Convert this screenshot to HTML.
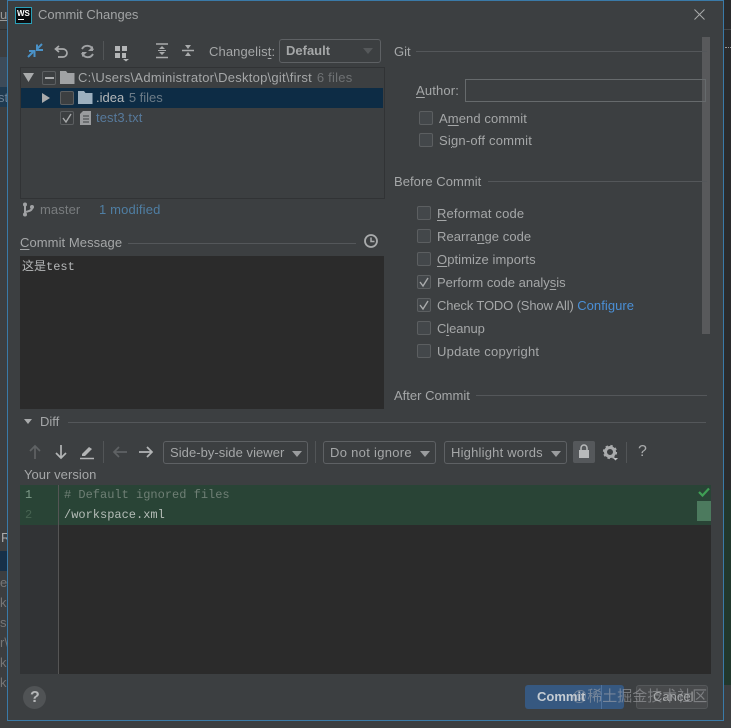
<!DOCTYPE html>
<html><head><meta charset="utf-8"><style>
html,body{margin:0;padding:0;background:#3c3e40}
body{width:731px;height:728px;overflow:hidden;position:relative;font:13px "Liberation Sans","Noto Sans CJK SC",sans-serif;color:#a5a7a8;letter-spacing:0;filter:blur(.35px)}
.a,.t{position:absolute}
.t{white-space:nowrap;line-height:16px}
.m{font-family:"Liberation Mono","Noto Sans CJK SC",monospace;font-size:12px;letter-spacing:0}
.l{position:absolute;height:1px;background:#54575a}
.cb{position:absolute;width:12px;height:12px;border:1px solid #5c5f61;border-radius:2px;background:#43474a}
.cb svg{position:absolute;left:1px;top:1px}
.dd{position:absolute;height:21px;border:1px solid #5e6164;border-radius:3px;box-sizing:content-box;line-height:21px;padding-left:6px;color:#a5a7a8;white-space:nowrap}
.dd i{position:absolute;right:7px;top:8px;border:5px solid transparent;border-top:6px solid #9a9c9e;border-bottom:0}
u{text-underline-offset:2px}
svg{position:absolute;overflow:visible}
</style></head><body>
<!-- backdrop -->
<div class="a" style="left:0;top:57px;width:8px;height:30px;background:#3d4b59"></div>
<div class="a" style="left:0;top:87px;width:8px;height:20px;background:#1f3a50"></div>
<div class="a" style="left:0;top:29px;width:8px;height:1px;background:#2e3032"></div>
<div class="a" style="left:0;top:551px;width:8px;height:20px;background:#173048"></div>
<div class="t" style="left:0;top:7px;color:#999;width:7px;overflow:hidden;text-decoration:underline">u</div>
<div class="t" style="left:0;top:90px;color:#6f8294;width:7px;overflow:hidden;text-indent:-2px">st</div>
<div class="t" style="left:1px;top:530px;color:#aaa;width:6px;overflow:hidden">R</div>
<div class="t" style="left:0;top:575px;color:#777;width:7px;overflow:hidden">e</div>
<div class="t" style="left:0;top:595px;color:#777;width:7px;overflow:hidden">k</div>
<div class="t" style="left:0;top:615px;color:#777;width:7px;overflow:hidden">s</div>
<div class="t" style="left:0;top:635px;color:#777;width:7px;overflow:hidden">r\</div>
<div class="t" style="left:0;top:655px;color:#777;width:7px;overflow:hidden">k</div>
<div class="t" style="left:0;top:675px;color:#777;width:7px;overflow:hidden">k</div>
<!-- dialog -->
<div class="a" style="left:7px;top:0;width:715px;height:719px;background:#3c3f41;border:1px solid #3a7aa8"></div>
<div class="a" style="left:724px;top:0;width:7px;height:490px;background:#2a2b2d"></div>
<div class="a" style="left:724px;top:490px;width:7px;height:195px;background:#21382d"></div>
<div class="a" style="left:724px;top:29px;width:7px;height:1px;background:#44474a"></div>
<div class="a" style="left:725px;top:47px;width:6px;height:1px;border-top:1px dotted #999"></div>
<!-- title -->
<div class="a" style="left:15px;top:7px;width:15px;height:15px;background:#0b0d10;border:1px solid #2aa0b8"></div>
<div class="t" style="left:17px;top:9px;font:bold 8px/9px 'Liberation Sans';color:#fff;letter-spacing:0">WS</div>
<div class="a" style="left:18px;top:19px;width:6px;height:1px;background:#fff"></div>
<div class="t" style="left:38px;top:7px;color:#a2a4a5">Commit Changes</div>
<svg style="left:694px;top:9px" width="11" height="11"><path d="M.5.5l10 10M10.500.5l-10 10" stroke="#a8aaab" stroke-width="1"/></svg>
<!-- toolbar -->
<svg style="left:28px;top:43px" width="15" height="16"><path d="M14 1L9 6M9 1.500V7h6" stroke="#4a92c8" stroke-width="2" fill="none"/><path d="M0 14l5-5M6.500 14V8H1" stroke="#4a92c8" stroke-width="2" fill="none"/></svg>
<svg style="left:54px;top:44px" width="15" height="15"><path d="M5 2L1.500 5 5 8M2 5h7a4 4 0 0 1 0 8H4" stroke="#a9abac" stroke-width="1.700" fill="none"/></svg>
<svg style="left:80px;top:44px" width="15" height="15"><path d="M13 6a6 6 0 0 0-11-1M2 9a6 6 0 0 0 11 1" stroke="#a0a2a4" stroke-width="1.900" fill="none"/><path d="M13 2v5H8M2 13V8h5" fill="#a0a2a4"/></svg>
<div class="a" style="left:103px;top:41px;width:1px;height:19px;background:#525557"></div>
<svg style="left:115px;top:46px" width="16" height="15"><path d="M0 0h5v5H0zM7 0h5v5H7zM0 7h5v5H0zM7 7h4v5H7z" fill="#b4b6b7"/><path d="M8 13h6l-3 2.500z" fill="#b4b6b7"/></svg>
<svg style="left:155px;top:43px" width="14" height="16"><path d="M1 1h12M1 14.500h12" stroke="#a9abac" stroke-width="1.500"/><path d="M7 3l3 3H4zM7 12l3-3H4z" fill="#a9abac"/><path d="M3 7.500h8" stroke="#a9abac"/></svg>
<svg style="left:181px;top:43px" width="14" height="16"><path d="M1 7.500h12" stroke="#a9abac" stroke-width="1.500"/><path d="M7 6L4 2h6zM7 9l3 4H4z" fill="#a9abac"/></svg>
<div class="t" style="left:209px;top:44px;letter-spacing:.1px">Changelis<u>t</u>:</div>
<div class="dd" style="left:279px;top:39px;width:94px;font-weight:bold;height:22px;line-height:21px">Default<i style="border-top-color:#55585a"></i></div>
<!-- tree -->
<div class="a" style="left:20px;top:67px;width:363px;height:130px;background:#3c3f41;border:1px solid #313335"></div>
<div class="a" style="left:21px;top:88px;width:362px;height:20px;background:#0d2c45"></div>
<svg style="left:23px;top:73px" width="12" height="10"><path d="M0 0h11L5.500 9z" fill="#a9abac"/></svg>
<div class="cb" style="left:42px;top:71px;background:#3c3f41"></div><div class="a" style="left:45px;top:77px;width:9px;height:2px;background:#a9abac"></div>
<svg style="left:60px;top:71px" width="15" height="13"><path d="M0 0h6l1.500 2H14.500v11H0z" fill="#a0a2a4"/></svg>
<div class="t" style="left:78px;top:70px;letter-spacing:.25px">C:\Users\Administrator\Desktop\git\first <span style="color:#6f7274;margin-left:1px">6 files</span></div>
<svg style="left:42px;top:93px" width="9" height="10"><path d="M0 0l8 5-8 5z" fill="#a9abac"/></svg>
<div class="cb" style="left:60px;top:91px;background:#3c3f41"></div>
<svg style="left:78px;top:91px" width="15" height="13"><path d="M0 0h6l1.500 2H14.500v11H0z" fill="#9db0bf"/></svg>
<div class="t" style="left:96px;top:90px;color:#b5b8ba">.idea <span style="color:#6d7c88;margin-left:1px">5 files</span></div>
<div class="cb" style="left:60px;top:111px;background:#3c3f41"><svg style="left:1px;top:1px" width="10" height="10"><path d="M1 5l3 4 5-8" stroke="#a9abac" stroke-width="1.400" fill="none"/></svg></div>
<svg style="left:80px;top:111px" width="11" height="14"><path d="M0 3l3-3h8v14H0z" fill="#9a9c9e"/><path d="M3 5h6M3 8h6M3 11h6" stroke="#3c3f41"/></svg>
<div class="t" style="left:96px;top:110px;color:#577a9c;letter-spacing:.1px">test3.txt</div>
<!-- status -->
<svg style="left:22px;top:202px" width="12" height="15"><circle cx="3" cy="2.500" r="2" fill="#a0a2a4"/><circle cx="3" cy="12.500" r="2" fill="#a0a2a4"/><circle cx="10" cy="5" r="2" fill="#a0a2a4"/><path d="M3 3v9M10 6c0 3-4 3-6 4" stroke="#a0a2a4" stroke-width="2" fill="none"/></svg>
<div class="t" style="left:40px;top:202px;color:#797c7e;letter-spacing:.1px">master</div>
<div class="t" style="left:99px;top:202px;color:#4f7ea3;letter-spacing:.15px">1 modified</div>
<!-- commit msg -->
<div class="t" style="left:20px;top:235px;letter-spacing:.07px"><u>C</u>ommit Message</div>
<div class="l" style="left:128px;top:243px;width:228px"></div>
<svg style="left:364px;top:234px" width="14" height="14"><circle cx="7" cy="7" r="6" fill="none" stroke="#a9abac" stroke-width="1.800"/><path d="M7 3.500V7.500h3.500" stroke="#a9abac" stroke-width="1.500" fill="none"/></svg>
<div class="a" style="left:20px;top:256px;width:364px;height:153px;background:#2b2b2b"></div>
<div class="t m" style="left:22px;top:259px;color:#b5b7b8">这是test</div>
<!-- right -->
<div class="a" style="left:702px;top:37px;width:8px;height:297px;background:#58595b"></div>
<div class="t" style="left:394px;top:44px">Git</div>
<div class="l" style="left:416px;top:51px;width:291px"></div>
<div class="t" style="left:416px;top:83px;letter-spacing:.15px"><u>A</u>uthor:</div>
<div class="a" style="left:465px;top:79px;width:239px;height:21px;border:1px solid #666a6c"></div>
<div class="cb" style="left:419px;top:111px"></div>
<div class="t" style="left:439px;top:111px;letter-spacing:.1px">A<u>m</u>end commit</div>
<div class="cb" style="left:419px;top:133px"></div>
<div class="t" style="left:439px;top:133px;letter-spacing:.2px">Si<u>g</u>n-off commit</div>
<div class="t" style="left:394px;top:174px;letter-spacing:.05px">Before Commit</div>
<div class="l" style="left:488px;top:181px;width:219px"></div>
<div class="cb" style="left:417px;top:206px"></div><div class="t" style="left:437px;top:206px;letter-spacing:.15px"><u>R</u>eformat code</div>
<div class="cb" style="left:417px;top:229px"></div><div class="t" style="left:437px;top:229px;letter-spacing:.07px">Rearra<u>n</u>ge code</div>
<div class="cb" style="left:417px;top:252px"></div><div class="t" style="left:437px;top:252px;letter-spacing:.07px"><u>O</u>ptimize imports</div>
<div class="cb" style="left:417px;top:275px"><svg style="left:1px;top:1px" width="10" height="10"><path d="M1 5l3 4 5-8" stroke="#a9abac" stroke-width="1.400" fill="none"/></svg></div><div class="t" style="left:437px;top:275px">Perform code analy<u>s</u>is</div>
<div class="cb" style="left:417px;top:298px"><svg style="left:1px;top:1px" width="10" height="10"><path d="M1 5l3 4 5-8" stroke="#a9abac" stroke-width="1.400" fill="none"/></svg></div><div class="t" style="left:437px;top:298px;letter-spacing:-.14px">Check TODO (Show All) <span style="color:#4a8fd6;letter-spacing:.05px">Configure</span></div>
<div class="cb" style="left:417px;top:321px"></div><div class="t" style="left:437px;top:321px;letter-spacing:-.1px">C<u>l</u>eanup</div>
<div class="cb" style="left:417px;top:344px"></div><div class="t" style="left:437px;top:344px;letter-spacing:.25px">Update copyright</div>
<div class="t" style="left:394px;top:388px">After Commit</div>
<div class="l" style="left:476px;top:395px;width:231px"></div>
<!-- diff -->
<svg style="left:24px;top:419px" width="9" height="6"><path d="M0 0h8L4 5z" fill="#a9abac"/></svg>
<div class="t" style="left:40px;top:414px">Diff</div>
<div class="l" style="left:68px;top:422px;width:638px"></div>
<svg style="left:29px;top:445px" width="12" height="14"><path d="M6 1v13M1 6l5-5 5 5" stroke="#5f6264" stroke-width="1.700" fill="none"/></svg>
<svg style="left:55px;top:445px" width="12" height="14"><path d="M6 0v13M1 8l5 5 5-5" stroke="#b3b5b6" stroke-width="1.700" fill="none"/></svg>
<svg style="left:80px;top:444px" width="15" height="15"><path d="M2 10l7-7 3 2-7 7H2z" fill="#b3b5b6"/><path d="M0 14.500h14" stroke="#b3b5b6" stroke-width="1.500"/></svg>
<div class="a" style="left:103px;top:441px;width:1px;height:22px;background:#525557"></div>
<svg style="left:113px;top:446px" width="14" height="12"><path d="M14 6H1M6 1L1 6l5 5" stroke="#5f6264" stroke-width="1.700" fill="none"/></svg>
<svg style="left:139px;top:446px" width="14" height="12"><path d="M0 6h13M8 1l5 5-5 5" stroke="#b3b5b6" stroke-width="1.700" fill="none"/></svg>
<div class="dd" style="left:163px;top:441px;width:137px;letter-spacing:.05px">Side-by-side viewer<i style="right:5px;top:9px"></i></div>
<div class="a" style="left:315px;top:441px;width:1px;height:22px;background:#525557"></div>
<div class="dd" style="left:323px;top:441px;width:105px;letter-spacing:.3px">Do not ignore<i style="right:5px;top:9px"></i></div>
<div class="dd" style="left:444px;top:441px;width:115px;letter-spacing:.2px">Highlight words<i style="right:5px;top:9px"></i></div>
<div class="a" style="left:573px;top:441px;width:22px;height:22px;background:#55585b;border-radius:2px"></div>
<svg style="left:578px;top:444px" width="12" height="15"><path d="M3 6V4a3 3 0 0 1 6 0v2" stroke="#b8babb" stroke-width="1.500" fill="none"/><path d="M1 6h10v8H1z" fill="#b8babb"/></svg>
<svg style="left:603px;top:445px" width="16" height="16"><circle cx="7" cy="7" r="4.500" fill="none" stroke="#a9abac" stroke-width="3"/><circle cx="7" cy="7" r="6.200" fill="none" stroke="#a9abac" stroke-width="1.800" stroke-dasharray="2.400 2.500"/><path d="M10 13h5l-2.500 2.500z" fill="#c0c2c3"/></svg>
<div class="a" style="left:626px;top:442px;width:1px;height:21px;background:#525557"></div>
<div class="t" style="left:638px;top:444px;font-size:16px;color:#a9abac">?</div>
<div class="t" style="left:24px;top:467px;letter-spacing:.05px">Your version</div>
<!-- editor -->
<div class="a" style="left:20px;top:485px;width:691px;height:189px;background:#2b2b2b"></div>
<div class="a" style="left:20px;top:525px;width:38px;height:149px;background:#313335"></div>
<div class="a" style="left:20px;top:485px;width:691px;height:40px;background:#294436"></div>
<div class="a" style="left:58px;top:485px;width:1px;height:189px;background:#555"></div>
<div class="t m" style="left:25px;top:487px;color:#7d9a88">1</div>
<div class="t m" style="left:25px;top:507px;color:#476452">2</div>
<div class="t m" style="left:64px;top:487px;color:#6f7f75;">#&nbsp;Default ignored files</div>
<div class="t m" style="left:64px;top:507px;color:#b5bdb8">/workspace.xml</div>
<div class="a" style="left:697px;top:501px;width:14px;height:20px;background:#4c7a5e"></div>
<svg style="left:698px;top:487px" width="12" height="10"><path d="M1 5l3.500 3.500L11 1.500" stroke="#3f9f55" stroke-width="2.200" fill="none"/></svg>
<!-- footer -->
<div class="a" style="left:23px;top:686px;width:23px;height:23px;border-radius:50%;background:#505355"></div>
<div class="t" style="left:30px;top:690px;font:bold 16px/16px 'Liberation Sans';color:#b5b7b8;letter-spacing:0">?</div>
<div class="a" style="left:525px;top:685px;width:99px;height:24px;background:#365880;border-radius:3px"></div>
<div class="a" style="left:601px;top:685px;width:1px;height:24px;background:#4f729c"></div>
<div class="t" style="left:537px;top:689px;font-weight:bold;color:#c5ccd3">Commit</div>
<div class="a" style="left:636px;top:685px;width:72px;height:24px;background:#484a4c;border:1px solid #55585a;border-radius:3px;box-sizing:border-box"></div>
<div class="t" style="left:653px;top:689px;color:#a3a5a6">Cancel</div>
<div class="t" style="left:572px;top:689px;font-size:15px;letter-spacing:0;color:rgba(170,172,175,.55)">@稀土掘金技术社区</div>
</body></html>
